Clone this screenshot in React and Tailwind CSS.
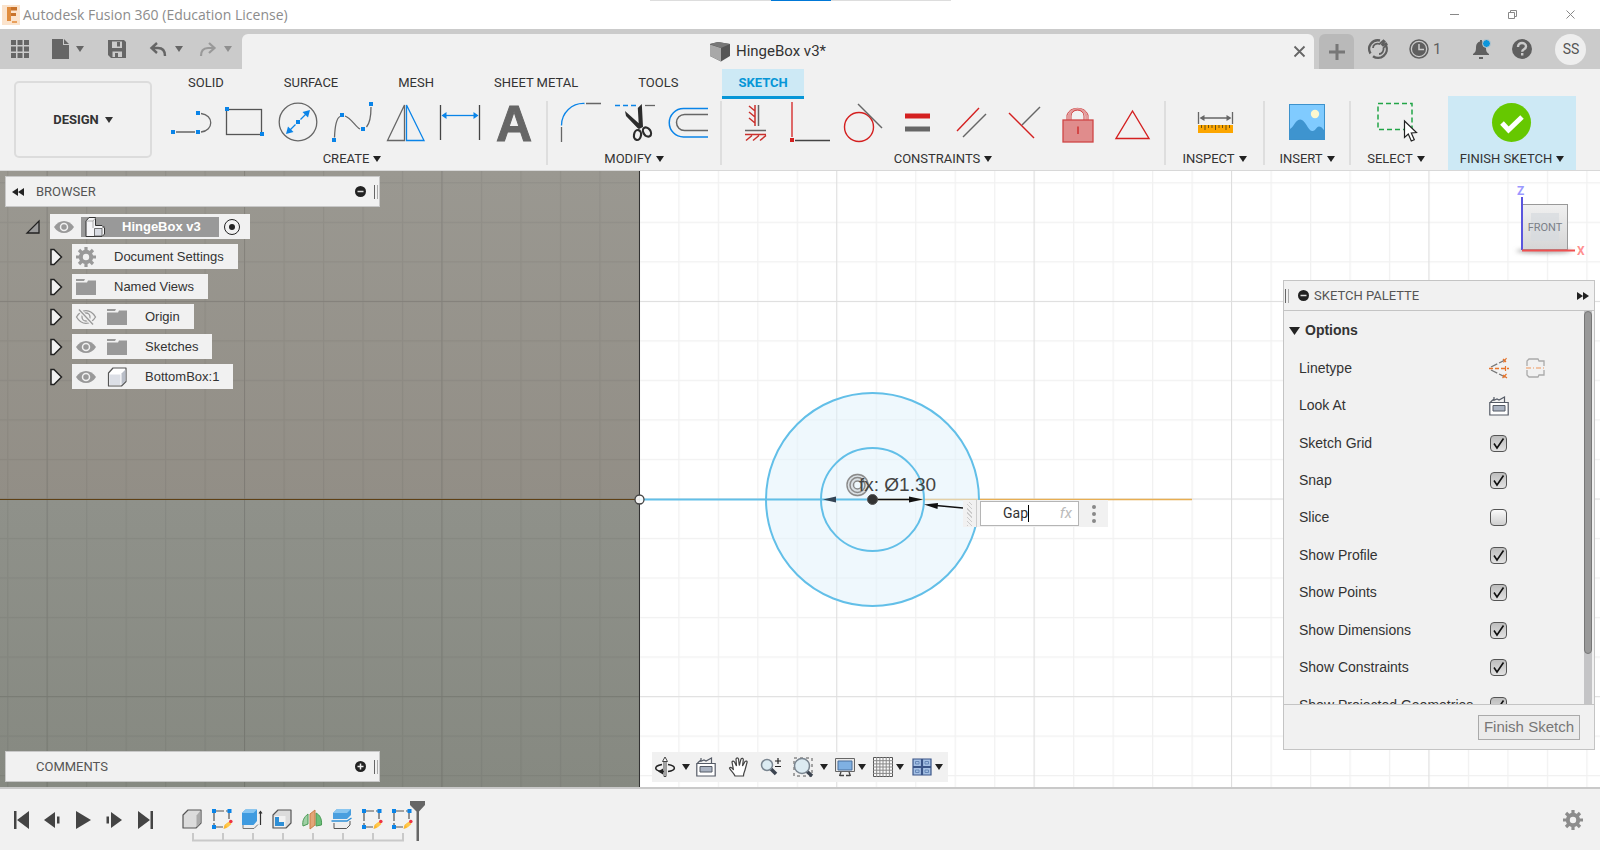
import { useState } from "react";

const sketchOptions = [
  { label: "Sketch Grid", on: true },
  { label: "Snap", on: true },
  { label: "Slice", on: false },
  { label: "Show Profile", on: true },
  { label: "Show Points", on: true },
  { label: "Show Dimensions", on: true },
  { label: "Show Constraints", on: true },
  { label: "Show Projected Geometries", on: true },
];

const ribbonTabs = ["SOLID", "SURFACE", "MESH", "SHEET METAL", "TOOLS", "SKETCH"];

const BLUE = "#0a84e8";
const GRAY = "#666";
const RED = "#d42020";

/* ---------- small shared pieces ---------- */

function Caret({ className = "text-[#333]" }) {
  return (
    <svg className={`shrink-0 ${className}`} width="8" height="6" viewBox="0 0 8 6" aria-hidden="true">
      <path d="M0 0h8L4 6z" fill="currentColor" />
    </svg>
  );
}

function Svg({ size = 20, className = "", children }) {
  return (
    <svg
      className={`shrink-0 overflow-visible ${className}`}
      width={size}
      height={size}
      viewBox={`0 0 ${size} ${size}`}
      fill="none"
      aria-hidden="true"
    >
      {children}
    </svg>
  );
}

function Dot({ x, y, color = BLUE }) {
  return <rect x={x - 2} y={y - 2} width="4" height="4" fill={color} />;
}

/* ---------- ribbon icons, 40 x 40 ---------- */

const createIcons = [
  {
    name: "Line",
    art: (
      <>
        <path d="M6 30h19M31 11.500C44 13 44 28.500 31 30" stroke={GRAY} strokeWidth="1.300" />
        <Dot x={3} y={30} />
        <Dot x={28} y={30} />
        <Dot x={28} y={11} />
      </>
    ),
  },
  {
    name: "Rectangle",
    art: (
      <>
        <rect x="2.500" y="7.500" width="35" height="25" stroke="#555" strokeWidth="1.300" />
        <Dot x={3} y={7} />
        <Dot x={38} y={32} />
      </>
    ),
  },
  {
    name: "Circle",
    art: (
      <>
        <circle cx="20" cy="20" r="18.800" stroke={GRAY} strokeWidth="1.300" />
        <path d="M22.500 17.500 28 12M17.500 22.500 12 28" stroke={BLUE} strokeWidth="1.300" />
        <path d="M32 8l-2 7.500-5.500-5.500zM8 32l2-7.500 5.500 5.500z" fill={BLUE} />
        <Dot x={20} y={20} />
      </>
    ),
  },
  {
    name: "Spline",
    art: (
      <>
        <path d="M2.500 35.500C3 22 5 16 8 14.500M13 14c6 2 11 11 15 13M34.500 25C38 21 39 14 39 5" stroke={GRAY} strokeWidth="1.300" />
        <Dot x={2} y={38} />
        <Dot x={10} y={13} />
        <Dot x={31} y={27} />
        <Dot x={39} y={2} />
      </>
    ),
  },
  {
    name: "Mirror",
    art: (
      <>
        <path d="M18.500 3v35.500H1.500z" stroke={GRAY} strokeWidth="1.300" />
        <path d="M20.500 3v35.500h17.500z" stroke={BLUE} strokeWidth="1.300" />
      </>
    ),
  },
  {
    name: "Sketch Dimension",
    art: (
      <>
        <path d="M.5 3v35M39.500 3v35" stroke="#444" strokeWidth="1.300" />
        <path d="M4 13.500h32" stroke={BLUE} strokeWidth="1.300" />
        <path d="M1.500 13.500l5-3.500v7zM38.500 13.500l-5-3.500v7z" fill={BLUE} />
      </>
    ),
  },
  {
    name: "Text",
    art: (
      <text x="20" y="39" textAnchor="middle" fontSize="50" fontWeight="700" fill={GRAY} stroke={GRAY} fontFamily="Liberation Sans, sans-serif">
        A
      </text>
    ),
  },
];

const modifyIcons = [
  {
    name: "Fillet",
    art: (
      <>
        <path d="M1.500 25v15M26 1.500h15" stroke={GRAY} strokeWidth="1.300" />
        <path d="M1.500 23.500A22 22 0 0 1 24.500 1.500" stroke={BLUE} strokeWidth="1.300" />
      </>
    ),
  },
  {
    name: "Trim",
    art: (
      <>
        <path d="M1 3.500h21" stroke={BLUE} strokeWidth="1.300" strokeDasharray="5 3" />
        <path d="M31 3.500h10" stroke={GRAY} strokeWidth="1.300" />
        <path d="M11 9l14 12.500.500 6-2-1.500L12 14zM23.800 6l4-4 1.200 23-4 2z" fill="#2c2c2c" />
        <ellipse cx="23.500" cy="33" rx="3.500" ry="5" stroke="#2c2c2c" strokeWidth="2.200" transform="rotate(10 23.500 33)" />
        <ellipse cx="33" cy="30" rx="3.500" ry="5" stroke="#2c2c2c" strokeWidth="2.200" transform="rotate(-35 33 30)" />
      </>
    ),
  },
  {
    name: "Offset",
    art: (
      <>
        <path d="M40 6.500H15.500a14.200 14.200 0 0 0 0 28.500H40" stroke={BLUE} strokeWidth="1.500" />
        <path d="M40 12.500H16.500a8 8 0 0 0 0 16H40" stroke={GRAY} strokeWidth="1.500" />
      </>
    ),
  },
];

const constraintIcons = [
  {
    name: "Horizontal/Vertical",
    art: (
      <>
        <path d="M21 3v21M15 4l6 5M15 10l6 5M15 16l6 5M11 32.500h21M18 33.500l-6 5M25 33.500l-6 5M32 33.500l-6 5" stroke="#c9302c" strokeWidth="1.500" />
        <path d="M24.500 3v21M11 28.500h21" stroke={GRAY} strokeWidth="1.500" />
      </>
    ),
  },
  {
    name: "Coincident",
    art: (
      <>
        <path d="M4 0v35" stroke={RED} strokeWidth="1.300" />
        <path d="M7 38.500h35" stroke="#444" strokeWidth="1.300" />
        <Dot x={4} y={38} color={RED} />
      </>
    ),
  },
  {
    name: "Tangent",
    art: (
      <>
        <circle cx="17" cy="25" r="14.500" stroke={RED} strokeWidth="1.400" />
        <path d="M16 2l24 24" stroke={GRAY} strokeWidth="1.400" />
      </>
    ),
  },
  {
    name: "Equal",
    art: (
      <>
        <path d="M9 14h25" stroke={RED} strokeWidth="5" />
        <path d="M9 27h25" stroke={GRAY} strokeWidth="5" />
      </>
    ),
  },
  {
    name: "Parallel",
    art: (
      <>
        <path d="M7 29 29 6" stroke={RED} strokeWidth="1.400" />
        <path d="M13 35 36 12" stroke={GRAY} strokeWidth="1.400" />
      </>
    ),
  },
  {
    name: "Perpendicular",
    art: (
      <>
        <path d="M5 11l25 25" stroke={RED} strokeWidth="1.400" />
        <path d="M18 23 36 5" stroke={GRAY} strokeWidth="1.400" />
      </>
    ),
  },
  {
    name: "Fix",
    art: (
      <>
        <path d="M9 18v-5a11 9.500 0 0 1 21 0v5" stroke="#cf3f3f" strokeWidth="1" />
        <path d="M10.800 18v-4a9 8.500 0 0 1 17.600 0v4" stroke="#e39a9a" strokeWidth="2.400" />
        <path d="M13 18v-4a6.500 6 0 0 1 13 0v4" stroke="#cf3f3f" strokeWidth="1" />
        <rect x="5" y="18" width="30" height="22" fill="#e08c8c" stroke="#cf4545" strokeWidth="1.300" />
        <path d="M20 24.500v7.500" stroke="#c22" strokeWidth="1.300" />
      </>
    ),
  },
  {
    name: "Polygon",
    art: <path d="M20.500 9 37 36.500H4z" stroke={RED} strokeWidth="1.400" />,
  },
];

const inspectIcons = [
  {
    name: "Measure",
    art: (
      <>
        <path d="M3.500 10v12M37.500 10v12M7 16h27" stroke={GRAY} strokeWidth="1.300" />
        <path d="M4.500 16l5-3v6zM36.500 16l-5-3v6z" fill={GRAY} />
        <rect x="3" y="23" width="35" height="8" fill="#fca600" />
        <path d="M6.500 23v3M10 23v5M13.500 23v3M17 23v3M20.500 23v5M24 23v3M27.500 23v3M31 23v5M34.500 23v3" stroke="#6b5010" />
      </>
    ),
  },
];

const insertIcons = [
  {
    name: "Insert image",
    art: (
      <>
        <rect x="2.500" y="2.500" width="35" height="35" fill="#80cbff" stroke="#3d92cc" />
        <circle cx="28" cy="12" r="4.200" fill="#fdf8cf" />
        <path d="M3 27c4-2 5-9 10-9.500s8 11 12 11.500 4-4.500 7-4.500 4 3 5.500 4V37H3z" fill="#3e94cf" />
      </>
    ),
  },
];

const selectIcons = [
  {
    name: "Select",
    art: (
      <>
        <rect x="2" y="1.500" width="34" height="26" stroke="#22a547" strokeWidth="1.500" strokeDasharray="5 3" />
        <path d="M28.500 19v16.500l3.800-3.500 3 7 3-1.300-3-6.700 5.200-.5z" fill="#fff" stroke="#222" strokeWidth="1.200" />
      </>
    ),
  },
];

const finishIcons = [
  {
    name: "Finish",
    art: (
      <>
        <circle cx="19.500" cy="20.500" r="19.500" fill="#66c800" />
        <path d="M10 21l6.500 7L30 15" stroke="#fff" strokeWidth="5" />
      </>
    ),
  },
];

function ToolGroup({ label, icons, className = "" }) {
  return (
    <section className={`flex shrink-0 flex-col items-center pt-[6px] ${className}`}>
      <div className="flex">
        {icons.map((icon) => (
          <button key={icon.name} type="button" aria-label={icon.name} className="flex h-10 w-[54px] justify-center">
            <Svg size={40}>{icon.art}</Svg>
          </button>
        ))}
      </div>
      <button type="button" className="mt-[6px] flex h-[22px] items-center gap-1 text-[13px] whitespace-nowrap">
        {label}
        <Caret className="text-[#222]" />
      </button>
    </section>
  );
}

/* ---------- window chrome ---------- */

function TitleBar() {
  return (
    <header className="relative flex h-[29px] items-center justify-between bg-white">
      <div className="absolute top-0 left-[650px] flex h-px w-[301px] justify-center bg-[#ddd]">
        <span className="h-px w-[60px] bg-[#0078d7]" />
      </div>
      <div className="flex items-center gap-[3px] pl-[2px] text-[14px] text-[#8c8c8c]">
        <svg width="18" height="20" viewBox="0 0 18 20" aria-hidden="true">
          <rect width="18" height="20" fill="#fbe3cc" />
          <path d="M5 2h10v3.500H9V8h5v3H9v5H5z" fill="#c8722a" />
          <path d="M5 2h4v14H5z" fill="#e08c3e" />
          <path d="M10 17h5" stroke="#e9a05c" strokeWidth="2" />
        </svg>
        <h1 className="font-['Open_Sans',sans-serif]">Autodesk Fusion 360 (Education License)</h1>
      </div>
      <div className="flex items-center gap-[49px] pr-[25px] text-[#888]">
        <button type="button" aria-label="Minimize">
          <Svg size={9}>
            <path d="M0 4.500h9" stroke="currentColor" />
          </Svg>
        </button>
        <button type="button" aria-label="Restore">
          <Svg size={9}>
            <path d="M.5 2.500h6v6h-6zM2.500 2.500v-2h6v6h-2" stroke="currentColor" />
          </Svg>
        </button>
        <button type="button" aria-label="Close">
          <Svg size={9}>
            <path d="M.5.500l8 8M8.500.500l-8 8" stroke="currentColor" />
          </Svg>
        </button>
      </div>
    </header>
  );
}

function TabBar() {
  return (
    <nav className="flex h-10 bg-[#cbcbcb]">
      <div className="flex w-[242px] shrink-0 items-center pl-[11px] text-[#666]">
        <button type="button" aria-label="Data panel">
          <Svg size={18}>
            <path
              d="M0 0h5v5H0zM6.500 0h5v5h-5zM13 0h5v5h-5zM0 6.500h5v5H0zM6.500 6.500h5v5h-5zM13 6.500h5v5h-5zM0 13h5v5H0zM6.500 13h5v5h-5zM13 13h5v5h-5z"
              fill="currentColor"
            />
          </Svg>
        </button>
        <button type="button" aria-label="File" className="ml-[23px] flex items-center gap-[7px]">
          <svg width="17" height="20" viewBox="0 0 17 20" aria-hidden="true">
            <path d="M0 0h11v6h6v14H0zM12 0l5 5h-5z" fill="currentColor" />
          </svg>
          <Caret className="text-[#666]" />
        </button>
        <button type="button" aria-label="Save" className="ml-[24px]">
          <Svg size={18}>
            <path d="M0 0h16l2 2v16H3l-3-3z" fill="currentColor" />
            <path d="M4 1.500h10V8H4zM4.500 11.500H14V17H4.500z" fill="#cbcbcb" />
            <path d="M9 2h3v4.500H9zM7 13h3v4H7z" fill="currentColor" />
          </Svg>
        </button>
        <button type="button" aria-label="Undo" className="ml-[24px] flex items-center gap-2">
          <Svg size={17}>
            <path d="M7 2 1.500 7 7 12M2 7h6c5 0 7 3 7 8" stroke="currentColor" strokeWidth="2.400" />
          </Svg>
          <Caret className="text-[#666]" />
        </button>
        <button type="button" aria-label="Redo" className="ml-[16px] flex items-center gap-2 text-[#999]">
          <Svg size={17}>
            <path d="M10 2l5.500 5L10 12M15 7H9c-5 0-7 3-7 8" stroke="currentColor" strokeWidth="2.200" />
          </Svg>
          <Caret className="text-[#8f8f8f]" />
        </button>
      </div>

      <div className="mt-[5px] flex flex-1 items-center rounded-t-md bg-[#f1f1f1] pr-[9px]">
        <div className="flex flex-1 items-center justify-center gap-[6px] text-[15px] text-[#333]">
          <Svg size={20}>
            <path d="M0 2l8-2 12 2v12l-9 5.500L0 14z" fill="#555" />
            <path d="M0 2.500 11 6v13.500L0 14z" fill="#a8a8a8" />
            <path d="M0 2l8-2 12 2-9 4z" fill="#777" />
          </Svg>
          HingeBox v3*
        </div>
        <button type="button" aria-label="Close tab" className="text-[#666]">
          <Svg size={11}>
            <path d="M.5.500l10 10M10.500.500l-10 10" stroke="currentColor" strokeWidth="1.800" />
          </Svg>
        </button>
      </div>

      <div className="flex w-[286px] shrink-0 items-center pl-[5px] text-[#5f5f5f]">
        <button type="button" aria-label="New tab" className="mt-[5px] flex h-[35px] w-[35px] items-center justify-center rounded-t-md bg-[#b9b9b9] text-[#777]">
          <Svg size={16}>
            <path d="M8 0v16M0 8h16" stroke="currentColor" strokeWidth="3" />
          </Svg>
        </button>
        <button type="button" aria-label="Extensions" className="ml-[14px]">
          <Svg size={20}>
            <path d="M12 1.500A8.700 8.700 0 0 0 2.500 14.500" stroke="currentColor" strokeWidth="2.400" />
            <path d="M5 17.200A8.700 8.700 0 0 0 18 6.500" stroke="currentColor" strokeWidth="2.400" />
            <path d="M5 9c0-3.500 3.500-5 6.500-4l4-3.500 1.200 1L14 5.500l1 1 3-2.200.800 1.200-3.300 3.500c.5 3-1.500 6-4.500 6" stroke="currentColor" strokeWidth="1.800" />
            <path d="M4 16.500 9 12" stroke="#cbcbcb" strokeWidth="1.500" />
          </Svg>
        </button>
        <button type="button" aria-label="Job status" className="ml-[21px] flex items-center gap-1 text-[15px]">
          <Svg size={20}>
            <circle cx="10" cy="10" r="9" stroke="currentColor" strokeWidth="1.500" />
            <circle cx="10" cy="10" r="7" fill="currentColor" />
            <path d="M10 5v5.500h5" stroke="#cbcbcb" strokeWidth="1.500" />
          </Svg>
          1
        </button>
        <button type="button" aria-label="Notifications" className="ml-[31px]">
          <Svg size={20}>
            <path d="M1 15c3-2 3-4 3-7 0-3.500 2-5 4-5.500V1h2v1.500c2 .5 4 2 4 5.500 0 3 0 5 3 7v1H1zM7 18h4v2H7z" fill="currentColor" />
            <circle cx="14.500" cy="4.500" r="4" fill="#0c96dc" stroke="#cbcbcb" />
          </Svg>
        </button>
        <button type="button" aria-label="Help" className="ml-[20px]">
          <Svg size={20}>
            <circle cx="10" cy="10" r="10" fill="currentColor" />
            <path d="M6 8c0-5.500 8-5 8-.5 0 3-3.800 2.500-3.800 5.200M10.200 14v2.500" stroke="#cbcbcb" strokeWidth="2.400" />
          </Svg>
        </button>
        <button type="button" className="ml-[23px] flex size-[31px] items-center justify-center rounded-full bg-[#eee] text-[14px] text-[#555]">
          SS
        </button>
      </div>
    </nav>
  );
}

function Ribbon() {
  const [active, setActive] = useState("SKETCH");

  return (
    <div className="flex h-[102px] border-b border-[#d8d8d8] bg-[#f1f1f1] text-[#333]">
      <button
        type="button"
        className="mt-3 ml-[14px] flex h-[77px] w-[138px] shrink-0 items-center justify-center gap-[6px] rounded-[5px] border-2 border-[#dcdcdc] text-[13px] font-bold"
      >
        DESIGN
        <Caret />
      </button>
      <div className="flex flex-1 flex-col">
        <div className="flex h-[27px] gap-[28px] pl-[20px]">
          {ribbonTabs.map((tab) => (
            <button
              key={tab}
              type="button"
              onClick={() => setActive(tab)}
              className={
                tab === active
                  ? "h-[30px] border-b-[3px] border-[#0696d7] bg-[#cde9f5] px-4 text-[13px] font-bold text-[#0696d7]"
                  : "h-[27px] px-4 text-[13px]"
              }
            >
              {tab}
            </button>
          ))}
        </div>
        <div className="flex pl-[6px]">
          <ToolGroup label="CREATE" icons={createIcons} className="px-[5px]" />
          <Separator />
          <ToolGroup label="MODIFY" icons={modifyIcons} className="px-[5px]" />
          <Separator />
          <ToolGroup label="CONSTRAINTS" icons={constraintIcons} className="px-[5px]" />
          <Separator />
          <ToolGroup label="INSPECT" icons={inspectIcons} className="w-[97px]" />
          <Separator />
          <ToolGroup label="INSERT" icons={insertIcons} className="w-[84px]" />
          <Separator />
          <ToolGroup label="SELECT" icons={selectIcons} className="w-[90px]" />
          <ToolGroup label="FINISH SKETCH" icons={finishIcons} className="ml-[7px] w-[128px] bg-[#cde9f5]" />
        </div>
      </div>
    </div>
  );
}

function Separator() {
  return <div className="mt-[5px] h-[64px] w-[2px] shrink-0 bg-[#dedede]" />;
}

/* ---------- browser tree ---------- */

function Eye({ off = false }) {
  return (
    <Svg size={20} className="text-[#999]">
      {off ? (
        <>
          <path d="M.5 10c5-8.500 14-8.500 19 0-5 8.500-14 8.500-19 0z" stroke="currentColor" strokeWidth="1.300" />
          <circle cx="10" cy="10" r="4" stroke="currentColor" strokeWidth="1.300" />
          <path d="M3 2.500l14 15" stroke="#f1f1f1" strokeWidth="4" />
          <path d="M3 2.500l14 15" stroke="currentColor" strokeWidth="1.300" />
        </>
      ) : (
        <>
          <path d="M0 10C5 2 15 2 20 10 15 18 5 18 0 10z" fill="currentColor" />
          <circle cx="10" cy="10" r="3.500" fill="currentColor" stroke="#f1f1f1" strokeWidth="1.500" />
        </>
      )}
    </Svg>
  );
}

function Folder() {
  return (
    <Svg size={20} className="text-[#999]">
      <path d="M0 5.500h11l1-2h8V18H0zM0 2h9l-1 2H0z" fill="currentColor" />
    </Svg>
  );
}

function Gear({ className = "text-[#999]" }) {
  return (
    <Svg size={20} className={className}>
      <circle cx="10" cy="10" r="5.200" stroke="currentColor" strokeWidth="4" />
      <path
        d="M10 0v4M10 16v4M0 10h4M16 10h4M3 3l3 3M14 14l3 3M3 17l3-3M14 6l3-3"
        stroke="currentColor"
        strokeWidth="3.200"
      />
    </Svg>
  );
}

function Body() {
  return (
    <Svg size={20}>
      <path d="M1.500 6 6 1h13v13.500L14.500 19h-13z" fill="#fff" stroke="#555" strokeWidth="1.200" strokeLinejoin="round" />
      <path d="M2.500 7.500h11V18h-11z" fill="#dcdfe6" />
      <path d="M14.500 6.500V18L18.500 14V2.500z" fill="#b9bec8" />
    </Svg>
  );
}

function Component() {
  return (
    <Svg size={20}>
      <path d="M1 4l3-3.500h6.500v8H17l2.500 2.500v6L17 19.500H1z" fill="#f5f5f7" stroke="#333" strokeLinejoin="round" />
      <path d="M9.500 11.500H17v7.500H9.500zM17 11.500l2.500-2.500" fill="#d9dce3" stroke="#555" strokeWidth=".800" />
      <path d="M1 4h7l2.500-3M8 4v7" stroke="#999" strokeWidth=".800" />
    </Svg>
  );
}

function Expander() {
  return (
    <button type="button" aria-label="Expand" className="flex w-[22px] shrink-0 justify-start">
      <svg width="13" height="18" viewBox="0 0 13 18" aria-hidden="true">
        <path d="M1 1.500h3L11.500 9 4 16.500H1z" fill="#f1f1f1" stroke="#222" strokeWidth="1.500" />
      </svg>
    </button>
  );
}

const treeItems = [
  { name: "Document Settings", icons: [<Gear key="g" />] },
  { name: "Named Views", icons: [<Folder key="f" />] },
  { name: "Origin", icons: [<Eye key="e" off />, <Folder key="f" />] },
  { name: "Sketches", icons: [<Eye key="e" />, <Folder key="f" />] },
  { name: "BottomBox:1", icons: [<Eye key="e" />, <Body key="b" />] },
];

function Grip() {
  return <span className="h-[14px] w-[4px] border-x border-r-[#aaa] border-l-[#666]" />;
}

function Browser() {
  return (
    <aside className="w-[375px]">
      <div className="flex h-[31px] items-center border border-[#c8c8c8] bg-[#f1f1f1] pr-px pl-[6px] text-[#555]">
        <button type="button" aria-label="Collapse" className="text-[#222]">
          <svg width="12" height="8" viewBox="0 0 12 8" aria-hidden="true">
            <path d="M6 0v8L0 4zM12 0v8L6 4z" fill="currentColor" />
          </svg>
        </button>
        <h2 className="ml-[12px] flex-1 text-[13px]">BROWSER</h2>
        <button type="button" aria-label="Hide" className="mr-2">
          <Svg size={11}>
            <circle cx="5.500" cy="5.500" r="5.500" fill="#222" />
            <path d="M2.500 5.500h6" stroke="#ddd" strokeWidth="1.500" />
          </Svg>
        </button>
        <Grip />
      </div>

      <ul className="mt-[7px] flex flex-col gap-[5px] font-['Liberation_Sans',Arial,sans-serif] text-[13px] text-[#333]">
        <li className="flex items-center pl-[21px]">
          <button type="button" aria-label="Collapse HingeBox" className="w-6">
            <Svg size={14}>
              <path d="M13 1v12H1z" fill="#999" stroke="#222" strokeWidth="1.300" />
            </Svg>
          </button>
          <div className="flex h-[25px] items-center bg-[#f1f1f1] pr-[10px] pl-[4px]">
            <Eye />
            <div className="ml-[7px] flex h-5 w-[138px] items-center bg-[#999] pl-1 font-bold text-white">
              <Component />
              <span className="flex-1 pl-[17px]">HingeBox v3</span>
            </div>
            <label className="ml-[5px] flex size-4 items-center justify-center rounded-full border border-[#222]">
              <input type="radio" defaultChecked aria-label="Activate component" className="size-[6px] appearance-none rounded-full bg-[#222]" />
            </label>
          </div>
        </li>
        {treeItems.map((item) => (
          <li key={item.name} className="flex items-center pl-[45px]">
            <Expander />
            <div className="flex h-[25px] items-center gap-[11px] bg-[#f1f1f1] pr-[14px] pl-[4px]">
              {item.icons}
              <span className="pl-[7px]">{item.name}</span>
            </div>
          </li>
        ))}
      </ul>
    </aside>
  );
}

function Comments() {
  return (
    <div className="flex h-[31px] w-[375px] items-center border border-[#c8c8c8] bg-[#f1f1f1] pr-px pl-[30px] text-[#555]">
      <h2 className="flex-1 text-[13px]">COMMENTS</h2>
      <button type="button" aria-label="Add comment" className="mr-2">
        <Svg size={11}>
          <circle cx="5.500" cy="5.500" r="5.500" fill="#222" />
          <path d="M2.500 5.500h6M5.500 2.500v6" stroke="#eee" strokeWidth="1.500" />
        </Svg>
      </button>
      <Grip />
    </div>
  );
}

/* ---------- canvas drawing ---------- */

// grid pitch is about 39.5px, every fifth line is heavier
function Scene() {
  return (
    <svg className="absolute inset-0 h-full w-full" aria-hidden="true">
      <defs>
        <linearGradient id="solid" x1="0" y1="0" x2="0" y2="1">
          <stop offset="0" stopColor="#9a9891" />
          <stop offset=".533" stopColor="#928e86" />
          <stop offset=".533" stopColor="#8f918a" />
          <stop offset="1" stopColor="#868981" />
        </linearGradient>
        <pattern id="minor" width="39.480" height="39.520" patternUnits="userSpaceOnUse" x="46.600" y="11.200">
          <path d="M.5 0v39.520M0 .5h39.520" stroke="#000" strokeOpacity=".055" strokeWidth="1.400" />
        </pattern>
        <pattern id="major" width="197.400" height="197.600" patternUnits="userSpaceOnUse" x="46.600" y="130">
          <path d="M.5 0v197.600M0 .5h197.600" stroke="#000" strokeOpacity=".08" />
        </pattern>
      </defs>
      <rect width="639" height="100%" fill="url(#solid)" />
      <rect width="100%" height="100%" fill="url(#minor)" />
      <rect width="100%" height="100%" fill="url(#major)" />
      <path d="M639.500 0v1000" stroke="#333" />
      <path d="M0 328.500h639" stroke="#5e4014" />
      <path d="M872 328.500h320" stroke="#e8ae52" strokeWidth="1.300" />

      <circle cx="872.500" cy="328.500" r="106.500" fill="#dff2fc" fillOpacity=".5" stroke="#62bfe8" strokeWidth="2" />
      <circle cx="872.500" cy="328.500" r="51.500" stroke="#62bfe8" strokeWidth="2" fill="none" />
      <path d="M640 328.500h232" stroke="#62bfe8" strokeWidth="2" />
      <circle cx="639.500" cy="328.500" r="4.500" fill="#fff" fillOpacity=".9" stroke="#444" strokeWidth="1.300" />

      <path d="M877 328.500h38M936 334.500l27 2.500" stroke="#111" strokeWidth="1.300" />
      <path d="M923 328.500l-14-3v6zM924 333.500l14-1.500-.5 6z" fill="#111" />
      <path d="M823 328.500l13-3v6z" fill="#345" />
      <circle cx="872.500" cy="328.500" r="5" fill="#333" stroke="#555" />

      <g fill="none" stroke="#8a8a8a">
        <circle cx="857.500" cy="314" r="8" stroke="#b5b5b5" strokeWidth="7" opacity=".35" />
        <circle cx="857.500" cy="314" r="10.500" strokeWidth="1.300" />
        <circle cx="857.500" cy="314" r="7.500" strokeWidth="1.500" />
        <circle cx="857.500" cy="314" r="4" strokeWidth="1.500" />
      </g>
      <text x="859" y="320" fontSize="19" fill="#444" fontFamily="Liberation Sans, Arial, sans-serif">
        fx: Ø1.30
      </text>
    </svg>
  );
}

function DimensionInput() {
  const [value, setValue] = useState("Gap");

  return (
    <div className="absolute top-[329px] left-[963px] flex h-[27px] w-[145px] items-center bg-[#f1f1f1]">
      <span className="mx-1 h-6 w-[5px] bg-[repeating-linear-gradient(45deg,#ccc_0_1px,transparent_1px_3px)]" />
      <span className="mr-[3px] h-full w-px bg-[#ccc]" />
      <div className="flex h-[25px] w-[99px] items-center border border-[#b5b5b5] bg-white">
        <input
          aria-label="Dimension value"
          value={value}
          onChange={(e) => setValue(e.target.value)}
          className="w-[47px] bg-transparent text-right text-[14px] text-[#333] outline-none"
        />
        <span className="h-[17px] w-px bg-black" />
        <span className="flex-1 pr-[6px] text-right text-[15px] text-[#bbb] italic">fx</span>
      </div>
      <button type="button" aria-label="More" className="flex flex-1 justify-center text-[#888]">
        <svg width="4" height="18" viewBox="0 0 4 18" aria-hidden="true">
          <path d="M2 0a2 2 0 1 0 0 4 2 2 0 0 0 0-4M2 7a2 2 0 1 0 0 4 2 2 0 0 0 0-4M2 14a2 2 0 1 0 0 4 2 2 0 0 0 0-4" fill="currentColor" />
        </svg>
      </button>
    </div>
  );
}

function ViewCube() {
  return (
    <svg className="absolute top-[14px] right-[10px]" width="80" height="75" viewBox="0 0 80 75" role="img" aria-label="View cube">
      <defs>
        <linearGradient id="cube" x1="0" y1="0" x2="0" y2="1">
          <stop offset="0" stopColor="#f0f0f0" />
          <stop offset="1" stopColor="#d6d6d6" />
        </linearGradient>
        <filter id="shade" x="-20%" y="-200%" width="140%" height="500%">
          <feGaussianBlur stdDeviation="2" />
        </filter>
      </defs>
      <ellipse cx="34" cy="66" rx="28" ry="2" fill="#999" filter="url(#shade)" />
      <rect x="12.500" y="19.500" width="45" height="45" fill="url(#cube)" stroke="#999" />
      <rect x="21" y="28" width="28" height="28" fill="#d6dade" fillOpacity=".7" />
      <text x="35" y="46" textAnchor="middle" fontSize="11" fill="#7b8088" fontFamily="Roboto, sans-serif">
        FRONT
      </text>
      <path d="M12 12v53" stroke="#5a55dd" strokeWidth="2" />
      <path d="M12 65.500h53" stroke="#f05050" strokeWidth="2" />
      <text x="7" y="10" fontSize="12" fontWeight="700" fill="#9b98ff" fontFamily="Roboto, sans-serif">
        Z
      </text>
      <text x="67" y="70" fontSize="12" fontWeight="700" fill="#ff9090" fontFamily="Roboto, sans-serif">
        X
      </text>
    </svg>
  );
}

/* ---------- sketch palette ---------- */

function LookAtIcon() {
  return (
    <Svg size={20}>
      <path d="M.8 6.500h18.400V19H.800z" fill="#fff" stroke="#555b66" strokeWidth="1.200" />
      <path d="M4 9.500h12v5.500H4z" fill="#aab3c2" stroke="#555b66" />
      <path d="M1.500 6 5 3V1M4.500 4.500 8 3l2 1 5.500-3v5" stroke="#555b66" strokeWidth="1.200" />
    </Svg>
  );
}

function OptionCheckbox({ id, defaultChecked }) {
  const [checked, setChecked] = useState(defaultChecked);

  return (
    <span className="relative flex size-[17px]">
      <input
        id={id}
        type="checkbox"
        checked={checked}
        onChange={(e) => setChecked(e.target.checked)}
        className="size-[17px] appearance-none rounded-[4px] border border-[#555] bg-linear-to-b from-[#fafafa] to-[#cfcfcf] checked:from-[#bdbdbd] checked:to-[#e2e2e2]"
      />
      {checked && (
        <svg className="pointer-events-none absolute inset-0" width="17" height="17" viewBox="0 0 17 17" fill="none" aria-hidden="true">
          <path d="M4 8.500l3 4.500L13.500 3.500" stroke="#111" strokeWidth="1.600" />
        </svg>
      )}
    </span>
  );
}

function SketchPalette() {
  return (
    <aside className="w-[312px] border border-[#c4c4c4] bg-[#f1f1f1] text-[#333]">
      <div className="flex h-[30px] items-center border-b border-[#c4c4c4] pr-[5px] pl-px text-[#555]">
        <Grip />
        <Svg size={11} className="ml-[9px]">
          <circle cx="5.500" cy="5.500" r="5.500" fill="#222" />
          <path d="M2.500 5.500h6" stroke="#ddd" strokeWidth="1.500" />
        </Svg>
        <h2 className="flex-1 pl-[5px] text-[13px]">SKETCH PALETTE</h2>
        <button type="button" aria-label="Expand palette" className="text-[#222]">
          <svg width="12" height="8" viewBox="0 0 12 8" aria-hidden="true">
            <path d="M0 0v8l6-4zM6 0v8l6-4z" fill="currentColor" />
          </svg>
        </button>
      </div>

      <div className="flex h-[393px] overflow-hidden">
        <div className="grid h-[413px] flex-1 grid-rows-11 pt-px pl-[15px] font-['Liberation_Sans',Arial,sans-serif] text-[14px]">
          <h3 className="-ml-[10px] flex items-center gap-[5px] font-bold">
            <svg width="11" height="8" viewBox="0 0 11 8" aria-hidden="true">
              <path d="M0 0h11L5.500 8z" fill="#222" />
            </svg>
            Options
          </h3>
          <div className="grid grid-cols-[190px_37px_1fr] items-center">
            <span>Linetype</span>
            <button type="button" aria-label="Construction">
              <Svg size={20}>
                <path d="M2 9 17 1.500M2 12l15 7.500" stroke="#777" strokeWidth="1.300" strokeDasharray="7 2" />
                <path d="M0 10.500h20" stroke="#e8742a" strokeWidth="1.300" strokeDasharray="4 2" />
                <path d="M14 1l3 3M17.500 0l-3 4.500M16.500 8v5M14 17l4 3M17.500 16l-4 4" stroke="#e8742a" strokeWidth="1.200" />
              </Svg>
            </button>
            <button type="button" aria-label="Centerline">
              <Svg size={20}>
                <path d="M1 8V3l2-2h9l1 2h5v5M1 12v5l2 2h9l1-2h5v-5" stroke="#aaa" strokeWidth="1.300" />
                <path d="M0 10h20" stroke="#f0b48c" strokeWidth="1.300" strokeDasharray="5 2 1 2" />
              </Svg>
            </button>
          </div>
          <div className="grid grid-cols-[190px_37px_1fr] items-center">
            <span>Look At</span>
            <button type="button" aria-label="Look At">
              <LookAtIcon />
            </button>
          </div>
          {sketchOptions.map((opt, i) => (
            <div key={opt.label} className="grid grid-cols-[191px_1fr] items-center">
              <label htmlFor={`opt-${i}`} className="whitespace-nowrap">
                {opt.label}
              </label>
              <OptionCheckbox id={`opt-${i}`} defaultChecked={opt.on} />
            </div>
          ))}
        </div>
        <div className="mr-[2px] w-2 bg-[#c4c4c6]">
          <div className="h-[343px] rounded-full border border-[#777] bg-[#999]" />
        </div>
      </div>

      <div className="flex h-[45px] items-center justify-end border-t border-[#c4c4c4] pt-px pr-[14px]">
        <button
          type="button"
          className="h-[25px] border border-[#aaa] bg-[#ebebeb] px-[5px] font-['Liberation_Sans',Arial,sans-serif] text-[15px] text-[#777]"
        >
          Finish Sketch
        </button>
      </div>
    </aside>
  );
}

/* ---------- navigation bar ---------- */

function NavBar() {
  return (
    <div className="flex h-[30px] w-[296px] items-center bg-[#f1f1f1] pl-[3px] text-[#333]">
      <button type="button" aria-label="Orbit" className="flex w-[41px] items-center gap-[7px]">
        <Svg size={20}>
          <path d="M7 7.500C-2 9 -1 14 8 14.500h2M13 7.500c9 1.500 8 6 0 7" stroke="#222" strokeWidth="1.500" />
          <path d="M9 4.500v15h2v-15M7.500 4.500 10 0l2.500 4.500z" fill="#fff" stroke="#444" />
          <path d="M3 14.500l5-3v6z" fill="#222" />
        </Svg>
        <Caret className="text-[#222]" />
      </button>
      <button type="button" aria-label="Look at" className="w-[33px]">
        <LookAtIcon />
      </button>
      <button type="button" aria-label="Pan" className="w-[31px]">
        <Svg size={20}>
          <path
            d="M6 19c-1-3-5-6-5.500-8 1-1.500 3 0 4 2L3 5c.5-1.500 2-1 2.500 0L7.500 9 7 2c.5-1.500 2-1.500 2.500 0l.8 6.500L12 2c.8-1.300 2.500-.7 2.300.8L13.500 9l2.500-4.500c1-1 2.500-.3 2 1L16 13c-.5 2-1.500 3-1.500 6z"
            fill="#fff"
            stroke="#444"
            strokeWidth="1.200"
          />
        </Svg>
      </button>
      <button type="button" aria-label="Zoom" className="w-[33px]">
        <Svg size={20}>
          <path d="M11 12l5 5" stroke="#3c4450" strokeWidth="3.500" />
          <circle cx="7" cy="8" r="5.500" fill="#dcebf2" stroke="#7a8590" strokeWidth="1.500" />
          <path d="M18 1v6M15 4h6M15 9.500h6" stroke="#222" strokeWidth="1.200" />
        </Svg>
      </button>
      <button type="button" aria-label="Zoom window" className="flex w-[42px] items-center gap-[7px]">
        <Svg size={20}>
          <path d="M1 1h18v18H1z" stroke="#555" strokeDasharray="3 3" />
          <path d="M13.500 14l5.500 5" stroke="#3c4450" strokeWidth="3.500" />
          <circle cx="9" cy="9" r="7.500" fill="#dcebf2" stroke="#7a8590" strokeWidth="1.500" />
        </Svg>
        <Caret className="text-[#222]" />
      </button>
      <button type="button" aria-label="Display settings" className="flex w-[38px] items-center gap-[3px]">
        <Svg size={20}>
          <path d="M.5 1.500h19v13H.500z" fill="#e8e8e8" stroke="#666" />
          <path d="M3 4h14v9H3z" fill="#7fb0e2" stroke="#4a6f9c" />
          <path d="M6 15l-1.500 4M14 15l1.500 4M5 18.500h4M11 18.500h4" stroke="#444" strokeWidth="1.300" />
        </Svg>
        <Caret className="text-[#222]" />
      </button>
      <button type="button" aria-label="Grid and snaps" className="flex w-[39px] items-center gap-[3px]">
        <Svg size={20}>
          <path d="M.5.500h19v19H.500z" fill="#fafafa" stroke="#555" />
          <path d="M3.700 0v20M6.900 0v20M10 0v20M13.200 0v20M16.400 0v20M0 3.700h20M0 6.900h20M0 10h20M0 13.200h20M0 16.400h20" stroke="#888" />
        </Svg>
        <Caret className="text-[#222]" />
      </button>
      <button type="button" aria-label="Viewports" className="flex w-[35px] items-center gap-[3px]">
        <Svg size={20}>
          <path d="M1 2h8.500v7.500H1zM10.500 2H19v7.500h-8.500zM1 10.500h8.500V18H1zM10.500 10.500H19V18h-8.500z" fill="#a5c0e4" stroke="#3a5588" strokeWidth="1.200" />
          <path d="M3.500 4.500h3.500v2.500H3.500zM13 4.500h3.500v2.500H13zM3.500 13h3.500v2.500H3.500zM13 13h3.500v2.500H13z" stroke="#6688b8" />
        </Svg>
        <Caret className="text-[#222]" />
      </button>
    </div>
  );
}

/* ---------- timeline ---------- */

function SketchFeature() {
  return (
    <>
      <path d="M4 2h12M2 4v13M17 4v6M4 18h7" stroke="#555" strokeWidth="1.200" strokeDasharray="8 2" />
      <Dot x={2} y={2} />
      <Dot x={17.5} y={2} />
      <Dot x={2} y={18} />
      <path d="M11.500 20l1-4 4-3 2 2-4 4z" fill="#fbb62c" />
      <path d="M17 12.500l2.500 2.500-4 3.500-2.500-2.500z" fill="#ffc64a" />
      <circle cx="18.800" cy="12.500" r="1.800" fill="#ee3344" />
    </>
  );
}

function GrayBox() {
  return <path d="M1 6l5-5h13v13l-5 5H1z" fill="#dcdcdc" stroke="#555" strokeWidth="1.200" strokeLinejoin="round" />;
}

const features = [
  {
    name: "Component",
    art: (
      <>
        <GrayBox />
        <path d="M14.500 6.500V18.500L18.500 14V1.500z" fill="#aaa" />
      </>
    ),
  },
  { name: "Sketch 1", art: <SketchFeature /> },
  {
    name: "Extrude",
    art: (
      <>
        <path d="M1 16v3.500h11l4-4" fill="#eee" stroke="#777" />
        <path d="M0 4l3.500-3.500H15V12l-3.500 4H0z" fill="#3f9be0" />
        <path d="M0 4l3.500-3.500H15L11.500 4z" fill="#86c5f2" />
        <path d="M18.500 16V3M17 4.500l1.500-2 1.500 2" stroke="#333" strokeWidth="1.200" />
      </>
    ),
  },
  {
    name: "Shell",
    art: (
      <>
        <GrayBox />
        <path d="M2.500 7h11v11h-11z" fill="#f2f2f2" />
        <path d="M3 8h4v5h5v4H3z" fill="#2e8fd6" />
      </>
    ),
  },
  {
    name: "Mirror 1",
    art: (
      <>
        <path d="M6 5C2 8 0 12 1 17l5-2z" fill="#9fd0a4" stroke="#4a9a55" />
        <path d="M14 4c4 2 6 6 5.500 12L14 17z" fill="#6cc07a" stroke="#4a9a55" />
        <path d="M8 5l5-4v15l-5 4z" fill="#e3a678" stroke="#c87f48" />
      </>
    ),
  },
  {
    name: "Split body",
    art: (
      <>
        <path d="M1 4l4-4h14v6l-4 4H1z" fill="#4a9fdf" />
        <path d="M1 4l4-4h14l-4 4z" fill="#8ac6f0" />
        <path d="M2 14v5.500h12.500L18 16v-4" fill="#eee" stroke="#555" />
        <path d="M-.5 12h15.500l4.500-3" stroke="#2e8fd6" strokeWidth="1.400" />
      </>
    ),
  },
  { name: "Sketch 2", art: <SketchFeature /> },
  { name: "Sketch 3", art: <SketchFeature /> },
];

const playback = [
  { name: "Go to start", d: "M1 0h2.500v18H1zM16 0v18L4 9z" },
  { name: "Step back", d: "M11 1v16L0 9zM13 5.500h2.500v7H13z" },
  { name: "Play", d: "M1 0l15 9L1 18z" },
  { name: "Step forward", d: "M5 1v16l11-8zM.5 5.500H3v7H.500z" },
  { name: "Go to end", d: "M1 0v18l12-9zM13.500 0H16v18h-2.500z" },
];

function Timeline() {
  return (
    <footer className="flex h-[63px] items-start border-t-2 border-[#c9c9c9] bg-[#f1f1f1] pt-3 pr-[17px] pl-[13px]">
      <div className="flex gap-[15px] pt-[10px] text-[#444]">
        {playback.map((p) => (
          <button key={p.name} type="button" aria-label={p.name}>
            <svg width="16" height="18" viewBox="0 0 16 18" aria-hidden="true">
              <path d={p.d} fill="currentColor" />
            </svg>
          </button>
        ))}
      </div>
      <div className="ml-[29px] pt-2">
        <div className="flex gap-[10px]">
          {features.map((f) => (
            <button key={f.name} type="button" aria-label={f.name}>
              <Svg size={20}>{f.art}</Svg>
            </button>
          ))}
        </div>
        <svg className="mt-1" width="230" height="9" viewBox="0 0 230 9" fill="none" aria-hidden="true">
          <path d="M11 0v7.500h210V0M41 0v7M71 0v7M101 0v7M131 0v7M161 0v7M191 0v7" stroke="#c9c9c9" strokeWidth="2" />
        </svg>
      </div>
      <svg className="-ml-[2px]" width="15" height="40" viewBox="0 0 15 40" aria-hidden="true">
        <path d="M0 0h15v4L9 10.500V40H6.500V10.500L0 4z" fill="#666" />
      </svg>
      <button type="button" aria-label="Settings" className="ml-auto pt-[9px]">
        <Gear className="text-[#8c8c8c]" />
      </button>
    </footer>
  );
}

export default function App() {
  return (
    <div className="flex min-h-screen flex-col overflow-hidden bg-white font-[Roboto,sans-serif]">
      <TitleBar />
      <TabBar />
      <Ribbon />
      <main className="relative flex flex-1 flex-col justify-between bg-white">
        <Scene />
        <DimensionInput />
        <ViewCube />
        <div className="relative flex justify-between pt-[5px] pr-[5px] pl-[5px]">
          <Browser />
          <div className="pt-[104px]">
            <SketchPalette />
          </div>
        </div>
        <div className="absolute bottom-[5px] left-[5px]">
          <Comments />
        </div>
        <div className="absolute bottom-[5px] left-1/2 -translate-x-1/2">
          <NavBar />
        </div>
      </main>
      <Timeline />
    </div>
  );
}
